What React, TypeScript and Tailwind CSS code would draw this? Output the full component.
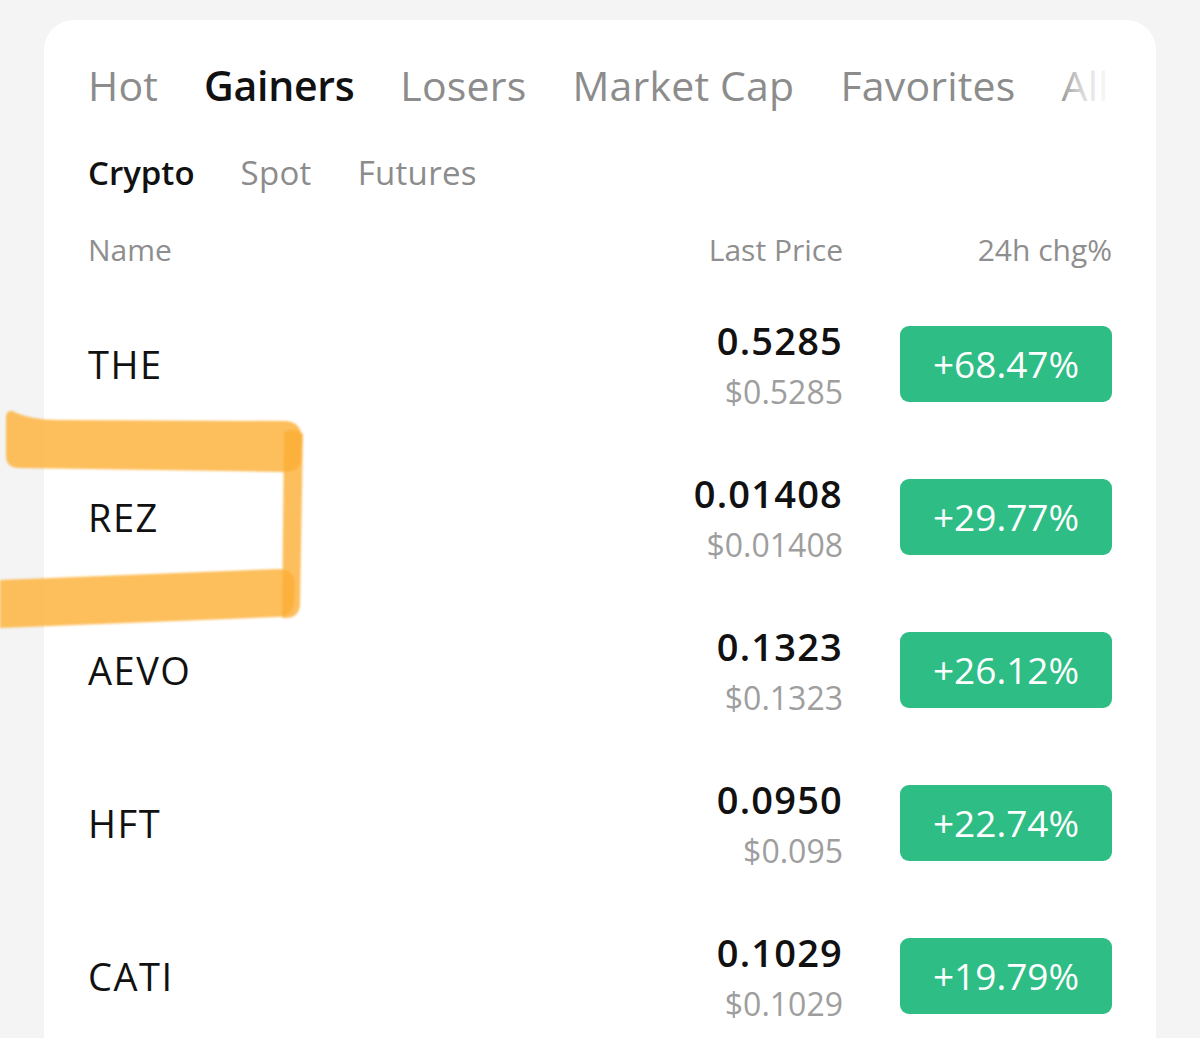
import React from "react";

const font = { fontFamily: '"Open Sans", "Liberation Sans", sans-serif' };

const rows = [
  { name: "THE", price: "0.5285", usd: "$0.5285", chg: "+68.47%" },
  { name: "REZ", price: "0.01408", usd: "$0.01408", chg: "+29.77%" },
  { name: "AEVO", price: "0.1323", usd: "$0.1323", chg: "+26.12%" },
  { name: "HFT", price: "0.0950", usd: "$0.095", chg: "+22.74%" },
  { name: "CATI", price: "0.1029", usd: "$0.1029", chg: "+19.79%" },
];

export default function App() {
  return (
    <div
      className="relative w-[1200px] h-[1038px] overflow-hidden bg-[#f4f4f4]"
      style={font}
    >
      <div className="ml-[44px] mt-[20px] w-[1112px] h-[1100px] rounded-[30px] bg-white px-[44px] pt-[37px]">
        {/* main tabs */}
        <div className="relative h-[56px] overflow-hidden">
          <div className="flex h-[56px] items-center gap-[46px] whitespace-nowrap text-[41px] leading-none tracking-[0.2px] text-[#8c8c8c] font-medium">
            <span>Hot</span>
            <span className="font-semibold tracking-[-0.3px] text-[#111]">Gainers</span>
            <span>Losers</span>
            <span>Market Cap</span>
            <span>Favorites</span>
            <span>All</span>
          </div>
          <div className="absolute right-0 top-0 h-full w-[56px] bg-gradient-to-r from-white/0 via-white/70 to-white" />
        </div>

        {/* sub tabs */}
        <div className="mt-[35px] flex h-[48px] items-center gap-[46px] text-[33px] leading-none text-[#8c8c8c]">
          <span className="font-semibold text-[#111]">Crypto</span>
          <span className="tracking-[0.3px]">Spot</span>
          <span className="tracking-[0.3px]">Futures</span>
        </div>

        {/* header */}
        <div className="mt-[34px] flex h-[40px] items-center text-[30px] leading-none text-[#8e8e8e]">
          <span className="flex-1">Name</span>
          <span className="text-right">Last Price</span>
          <span className="ml-[57px] w-[212px] text-right">24h chg%</span>
        </div>

        {/* rows */}
        <div className="mt-[17px] flex flex-col">
          {rows.map((r) => (
            <div key={r.name} className="flex h-[153px] items-center">
              <span className="flex-1 text-[38px] font-medium leading-none tracking-[1.5px] text-[#111]">
                {r.name}
              </span>
              <div className="mt-[4px] flex flex-col items-end">
                <span className="text-[38px] font-semibold leading-[44px] tracking-[1.2px] text-[#111]">
                  {r.price}
                </span>
                <span className="mt-[8px] text-[32px] leading-[44px] text-[#9e9e9e]">
                  {r.usd}
                </span>
              </div>
              <div className="ml-[57px] flex h-[76px] w-[212px] items-center justify-center rounded-[9px] bg-[#2ebd85] text-[37px] font-medium text-white">
                {r.chg}
              </div>
            </div>
          ))}
        </div>
      </div>

      {/* hand-drawn highlight */}
      <svg
        className="pointer-events-none absolute left-0 top-0 blur-[0.8px]"
        width="1200"
        height="1038"
        viewBox="0 0 1200 1038"
      >
        <g fill="#fdb43f" opacity="0.85">
          <path d="M 12 411 Q 30 420 60 420 L 286 421 Q 301 422 302 438 L 301 462 Q 298 472 284 472 L 20 468 Q 6 468 6 456 L 6 418 Q 6 410 12 411 Z" />
          <path d="M 0 580 L 278 569 Q 294 569 295 584 L 294 604 Q 292 617 276 617 L 0 628 Z" />
        </g>
        <path
          d="M 284 432 Q 293 426 303 434 L 300 606 Q 298 618 286 618 L 282 618 Z"
          fill="#fcae36"
          opacity="0.8"
        />
      </svg>
    </div>
  );
}
